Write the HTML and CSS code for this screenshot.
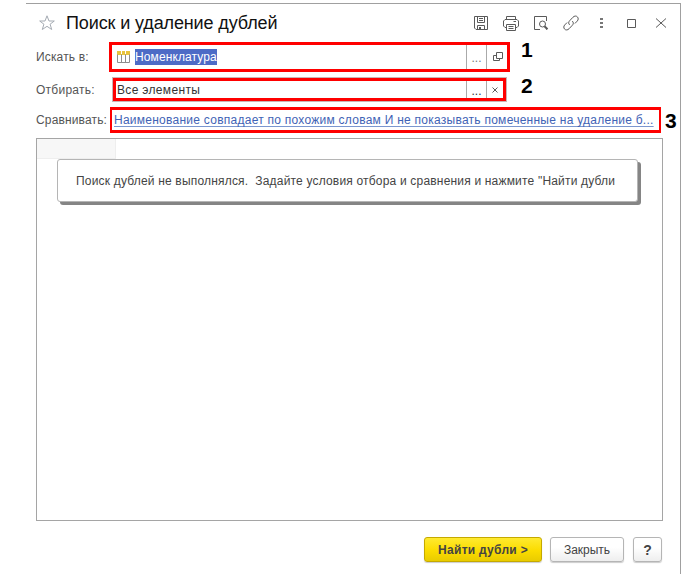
FILE: index.html
```html
<!DOCTYPE html>
<html lang="ru">
<head>
<meta charset="utf-8">
<title>Поиск и удаление дублей</title>
<link rel="stylesheet" href="styles.css">
</head>
<body>
<main class="window">
  <header class="titlebar">
    <svg class="star" width="18" height="18" viewBox="0 0 18 18"><path d="M9 1.8 11 7H16.3L12.1 10.2 13.7 15.5 9 12.3 4.3 15.5 5.9 10.2 1.7 7H7Z"/></svg>
    <h1 class="title">Поиск и удаление дублей</h1>
    <nav class="tools">
      <svg width="18" height="18" viewBox="0 0 18 18"><path d="M2.5 2.5H15.5V15.5H4L2.5 14ZM5.5 2.5V8.500H12.5V2.5M7 4.5H11M7 6.5H11M5.5 15.5V11.500H12.5V15.5"/><path class="solid" d="M7 13H9V15H7Z"/></svg>
      <svg width="18" height="18" viewBox="0 0 18 18"><path d="M4.5 5.500V2.500H13.500V5.500M4.500 13.500H3L1.500 12V7L3 5.500H15L16.500 7V12L15 13.500H13.500M4.500 10.500H13.500V16.500H4.500ZM6.500 12.500H11.500M6.500 14.500H11.500M11.500 7.500H14"/></svg>
      <svg width="18" height="18" viewBox="0 0 18 18"><path d="M8 15.500H2.500V2.500H14.500V7M14.500 14V15.500"/><circle cx="10.500" cy="10" r="3"/><path class="bold" d="M12.500 12.300 15.500 15.300"/></svg>
      <svg width="18" height="18" viewBox="0 0 18 18"><path d="M7.700 10.900C6.300 9.700 6.400 8 7.600 6.800L10.900 3.300C12.300 1.700 14.300 1.700 15.400 2.900S16.500 5.800 15.200 7.100L12.900 9.500M10.300 7.100C11.700 8.300 11.600 10 10.400 11.200L7.100 14.700C5.700 16.300 3.700 16.300 2.600 15.100S1.500 12.200 2.800 10.900L5.100 8.500"/></svg>
      <svg width="18" height="18" viewBox="0 0 18 18"><path class="dots" d="M8 4H11V6H8ZM8 8H11V10H8ZM8 12H11V14H8Z"/></svg>
      <svg width="18" height="18" viewBox="0 0 18 18"><path d="M5.500 5.500H13.500V13.500H5.500Z"/></svg>
      <svg width="18" height="18" viewBox="0 0 18 18"><path d="M4 4.500 14 13.500M14 4.500 4 13.500"/></svg>
    </nav>
  </header>

  <section class="form">
    <div class="row row-search">
      <label class="label"><span class="t-search">Искать в:</span></label>
      <div class="field field-search">
        <svg class="table-icon" width="13" height="12" viewBox="0 0 13 12"><path class="head" d="M0 0H13V4H0Z"/><path class="grid" d="M.5 3.500V11.500H12.500V3.500M4.500 3.500V11.500M8.500 3.500V11.500"/><path class="dash" d="M4.500 0V3M8.500 0V3"/></svg>
        <span class="value"><span class="selected">Номенклатура</span></span>
        <span class="pick">...</span>
        <span class="open"><svg width="12" height="12" viewBox="0 0 12 12"><path d="M4.500 1.500H10.500V7.500H4.500ZM4.500 4.500H1.500V9.500H7.500V7.500"/></svg></span>
      </div>
      <b class="mark mark-one">1</b>
    </div>
    <div class="row row-filter">
      <label class="label"><span class="t-filter">Отбирать:</span></label>
      <div class="field field-filter">
        <span class="value"><span class="t-all">Все элементы</span></span>
        <span class="pick dark">...</span>
        <span class="open clear"><svg width="8" height="8" viewBox="0 0 8 8"><path d="M1.500 1.500 6.500 6.500M6.500 1.500 1.500 6.500"/></svg></span>
      </div>
      <b class="mark mark-two">2</b>
    </div>
    <div class="row row-compare">
      <label class="label"><span class="t-compare">Сравнивать:</span></label>
      <div class="field field-compare"><a class="rule">Наименование совпадает по похожим словам И не показывать помеченные на удаление б...</a></div>
      <b class="mark mark-three">3</b>
    </div>
  </section>

  <section class="results">
    <div class="column-head"></div>
    <div class="message"><span class="message-text">Поиск дублей не выполнялся.&nbsp; Задайте условия отбора и сравнения и нажмите "Найти дубли</span></div>
  </section>

  <footer class="actions">
    <button class="button primary"><span class="t-find">Найти дубли &gt;</span></button>
    <button class="button close"><span class="t-close">Закрыть</span></button>
    <button class="button help">?</button>
  </footer>
</main>
</body>
</html>
```
FILE: styles.css
```css
* { box-sizing: border-box; }
html, body { height: 100%; overflow: hidden; }
body {
  margin: 0;
  padding: 3px 3px 0 26px;
  background: #fff;
  color: #444;
  font: 12px/16px "Liberation Sans", Arial, sans-serif;
}
.window {
  height: 571px;
  border-top: 1px solid #a0a0a0;
  border-right: 1px solid #a0a0a0;
  padding-left: 10px;
}
svg { display: block; fill: none; stroke: #5a5a5a; stroke-width: 1; flex: none; }
.titlebar { display: flex; align-items: center; height: 38px; padding-left: 2px; }
.star { stroke: #a5abb3; }
.title { margin: 0 0 0 10px; font-size: 18px; font-weight: 400; line-height: 24px; color: #111; white-space: nowrap; letter-spacing: -.12px; }
.tools { display: flex; gap: 12px; margin: 0 10px 0 auto; }
.bold { stroke-width: 2; }
.solid { fill: #5a5a5a; stroke: none; }
.dots { fill: #777; stroke: none; }

.row { display: flex; align-items: center; }
.row-search { height: 30px; }
.row-filter { height: 23px; margin-top: 6px; }
.row-compare { height: 26px; margin-top: 6px; }
.label { flex: none; width: 74px; color: #555; white-space: nowrap; }
.t-search { letter-spacing: .15px; }
.t-filter { letter-spacing: .25px; }
.t-compare { letter-spacing: .15px; }
.field { display: flex; align-items: stretch; height: 100%; border: 3px solid #f00; white-space: nowrap; }
.field-search { width: 401px; margin-left: -1px; padding-left: 5px; align-items: center; }
.field-filter { width: 393px; margin-left: 3px; outline: 1px solid rgba(150, 110, 110, .5); }
.field-compare { width: 551px; padding-left: 2px; border-width: 3px 2px; align-items: center; }
.value { flex: 1; color: #333; align-self: center; padding-left: 1px; }
.t-all { letter-spacing: .33px; }
.table-icon { margin-right: 4px; }
.table-icon .head { fill: #e8c33c; stroke: none; }
.table-icon .grid { stroke: #8d8d8d; }
.table-icon .dash { stroke: #fff; }
.selected { display: inline-block; background: #4d6bc6; color: #fff; height: 16px; line-height: 16px; letter-spacing: .1px; }
.pick, .open { display: flex; flex: none; align-items: center; justify-content: center; align-self: stretch; width: 20px; border-left: 1px solid #aaa; color: #777; }
.pick { padding-top: 2px; }
.field-search .open { width: 21px; }
.field-search .open svg { margin-left: 1px; }
.open.clear { width: 17px; }
.dark { color: #333; }
.mark { color: #000; font-size: 21px; line-height: 20px; }
.mark-one { margin: -14px 0 0 11px; }
.mark-two { margin: -7px 0 0 15px; }
.mark-three { margin: 2px 0 0 4px; }
.rule { color: #3f63b5; text-decoration: underline #7b96cf; text-underline-offset: 2px; letter-spacing: .255px; }

.results { width: 627px; height: 383px; margin-top: 5px; border: 1px solid #a5a5a5; }
.column-head { width: 79px; height: 20px; background: #f7f7f7; border-right: 1px solid #eee; border-bottom: 1px solid #eee; }
.message { display: flex; align-items: center; width: 581px; height: 43px; margin-left: 20px; padding-left: 18px; background: #fff; border: 1px solid #b5b5b5; border-radius: 3px; box-shadow: 3px 3px 0 #858585; white-space: nowrap; }
.message-text { letter-spacing: .185px; }

.actions { display: flex; width: 626px; margin-top: 16px; justify-content: flex-end; }
.button { height: 25px; padding: 0; border: 1px solid #b5b5b5; border-radius: 3px; background: linear-gradient(#fff 40%, #eee); color: #444; font: 12px/16px "Liberation Sans", Arial, sans-serif; white-space: nowrap; box-shadow: 0 1px 1px #ccc; }
.primary { width: 118px; border-color: #c5a900; background: linear-gradient(#ffea30, #fbdc00 55%, #e9cc00); font-weight: 700; }
.t-find { letter-spacing: .28px; }
.close { width: 74px; margin-left: 8px; }
.help { width: 29px; margin-left: 9px; font-size: 14px; font-weight: 700; }
```
